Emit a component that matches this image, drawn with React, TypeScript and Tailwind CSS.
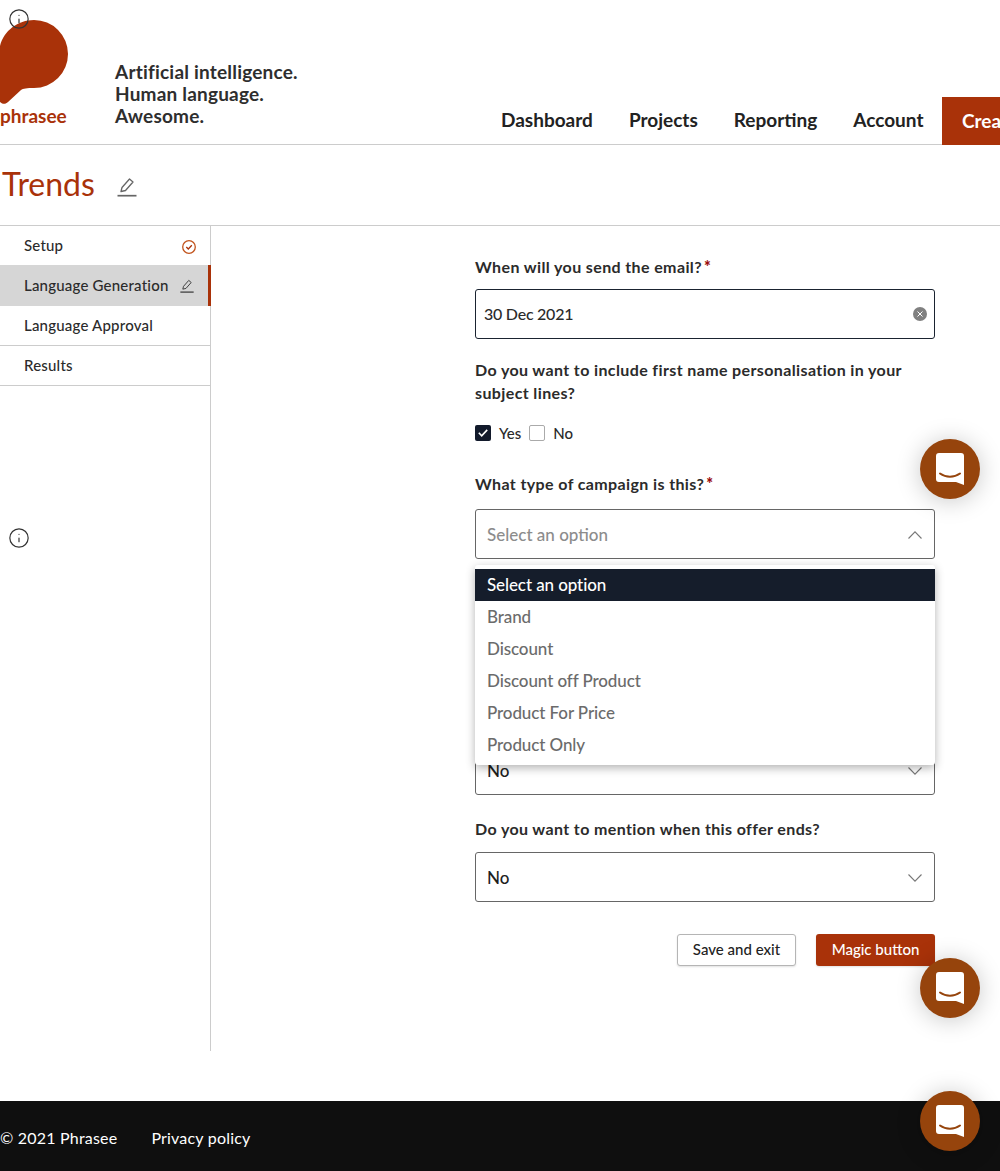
import { Info } from 'lucide-react';

const brand = 'text-[#a93209]';

const PenIcon = ({ className }: { className: string }) => (
  <svg viewBox="0 0 20 20" fill="none" stroke="currentColor" strokeWidth="1.3" className={className}>
    <path d="M4 14.500 5 10.500 12.500 2 16 5 8.500 13.500 4 14.500Z" strokeLinejoin="round" />
    <path d="M0.500 18.700H19.500" strokeWidth="1.700" />
  </svg>
);

const Chevron = ({ up }: { up?: boolean }) => (
  <svg viewBox="0 0 14 8" fill="none" stroke="#777" strokeWidth="1.100" className="w-[14px] h-[8px]">
    <path d={up ? 'M0.500 7.500 7 0.800 13.500 7.500' : 'M0.500 0.500 7 7.200 13.500 0.500'} />
  </svg>
);

const ChatButton = ({ className }: { className: string }) => (
  <div className={`absolute w-[60px] h-[60px] rounded-full bg-[#96440c] flex items-center justify-center shadow-[0_2px_24px_rgba(0,0,0,0.22)] ${className}`}>
    <svg viewBox="0 0 28 32" className="w-[28px] h-[32px]">
      <path d="M3 0H25A3 3 0 0 1 28 3V32L20 29H3A3 3 0 0 1 0 26V3A3 3 0 0 1 3 0Z" fill="#fff" />
      <path d="M4 20.500C10 24.800 18 24.800 24 20.500" fill="none" stroke="#96440c" strokeWidth="2" strokeLinecap="round" />
    </svg>
  </div>
);

const Select = ({ value, up, muted }: { value: string; up?: boolean; muted?: boolean }) => (
  <div className="h-[50px] border border-[#666] rounded-[3px] bg-white px-[11px] pt-[2px] flex items-center justify-between">
    <span className={`text-[17px] font-medium ${muted ? 'text-[#8c8c8c]' : 'text-[#1f1f1f]'}`}>{value}</span>
    <span className="mr-[1px]"><Chevron up={up} /></span>
  </div>
);

const Label = ({ children, required }: { children: string; required?: boolean }) => (
  <p className="text-[16px] leading-[23px] font-bold tracking-[0.38px] text-[#2b2b2b]">
    {children}
    {required && <span className="text-[#9b0d0d] ml-[2px] font-black">*</span>}
  </p>
);

const options = ['Brand', 'Discount', 'Discount off Product', 'Product For Price', 'Product Only'];

export default function App() {
  return (
    <div className="relative w-[1000px] h-[1171px] overflow-hidden bg-white font-['Lato',sans-serif]">
      <Info className="absolute left-[8px] top-[8px] w-[22px] h-[22px] text-[#333] z-10" strokeWidth={1.3} />
      <Info className="absolute left-[8px] top-[527px] w-[22px] h-[22px] text-[#333] z-10" strokeWidth={1.3} />

      {/* Header */}
      <header className="h-[145px] border-b border-[#ccc] flex items-end">
        <div className="w-[115px] h-[144px] shrink-0 relative">
          <svg viewBox="0 0 70 90" className="absolute left-[-1px] top-[18px] w-[70px] h-[90px]">
            <path d="M35 2A34 34 0 0 1 35 70C28 70 24 70.500 22 72L9 84C6 87 3 86 0 83V36C0 17 16 2 35 2Z" fill="#a93209" />
          </svg>
          <span className={`absolute left-0 top-[104px] text-[19px] leading-[24px] font-bold ${brand}`}>phrasee</span>
        </div>
        <div className="pb-[17px] text-[19px] leading-[22px] font-bold tracking-[0.2px] text-[#2e2e2e] w-[386px] shrink-0">
          <p>Artificial intelligence.</p>
          <p>Human language.</p>
          <p>Awesome.</p>
        </div>
        <nav className="flex gap-[36px] pb-[11px] text-[19px] leading-[26px] font-bold text-[#222] w-[441px] shrink-0">
          <span>Dashboard</span>
          <span>Projects</span>
          <span>Reporting</span>
          <span>Account</span>
        </nav>
        <div className="h-[48px] w-[100px] mb-[-1px] shrink-0 bg-[#a93209] text-white text-[19px] font-bold pl-[20px] flex items-center whitespace-nowrap">
          Create
        </div>
      </header>

      {/* Title */}
      <div className="h-[81px] border-b border-[#ccc] pl-[2px] pb-[3px] flex items-center gap-[22px]">
        <h1 className={`text-[32px] leading-[40px] font-normal ${brand}`}>Trends</h1>
        <PenIcon className="w-[20px] h-[20px] mt-[6px] text-[#666]" />
      </div>

      <div className="flex h-[825px]">
        {/* Sidebar */}
        <aside className="w-[211px] shrink-0 border-r border-[#ccc] text-[15px] font-medium tracking-[0.2px] text-[#2b2b2b]">
          <div className="h-[39px] pl-[24px] pr-[14px] flex items-center justify-between">
            <span>Setup</span>
            <svg viewBox="0 0 14 14" fill="none" className="w-[14px] h-[14px] mt-[2px]">
              <circle cx="7" cy="7" r="6.300" stroke="#c2541d" strokeWidth="1.300" />
              <path d="M4.300 7 6.300 9 9.800 5.200" stroke="#a93209" strokeWidth="1.300" />
            </svg>
          </div>
          <div className="h-[41px] pl-[24px] pr-[14px] flex items-center justify-between bg-[#d6d6d6] border-r-[3px] border-[#a93209] mr-[-1px]">
            <span>Language Generation</span>
            <PenIcon className="w-[14px] h-[14px] text-[#333]" />
          </div>
          <div className="h-[40px] pl-[24px] flex items-center border-b border-[#ccc]">Language Approval</div>
          <div className="h-[40px] pl-[24px] flex items-center border-b border-[#ccc]">Results</div>
        </aside>

        {/* Form */}
        <main className="w-[460px] ml-[264px] pt-[29px]">
          <Label required>When will you send the email?</Label>
          <div className="mt-[11px] h-[50px] border border-[#1a2330] rounded-[3px] pl-[8px] pr-[7px] pb-[1px] flex items-center justify-between">
            <span className="text-[16px] font-medium tracking-[-0.25px] text-[#2b2b2b]">30 Dec 2021</span>
            <span className="w-[14px] h-[14px] rounded-full bg-[#808080] flex items-center justify-center">
              <svg viewBox="0 0 6 6" className="w-[6px] h-[6px]" stroke="#fff" strokeWidth="1">
                <path d="M0.500 0.500 5.500 5.500M5.500 0.500 0.500 5.500" />
              </svg>
            </span>
          </div>
          <div className="mt-[19px]">
            <Label>Do you want to include first name personalisation in your subject lines?</Label>
          </div>
          <div className="mt-[21px] flex items-center h-[16px] text-[15px] font-medium text-[#2b2b2b]">
            <span className="w-[16px] h-[16px] rounded-[2px] bg-[#121a2b] flex items-center justify-center">
              <svg viewBox="0 0 10 8" fill="none" stroke="#fff" strokeWidth="1.600" className="w-[10px] h-[8px]">
                <path d="M0.800 3.800 3.700 6.800 9.200 0.900" />
              </svg>
            </span>
            <span className="ml-[8px]">Yes</span>
            <span className="ml-[8px] w-[16px] h-[16px] rounded-[2px] border border-[#aaa] bg-white" />
            <span className="ml-[8px]">No</span>
          </div>
          <div className="mt-[31px]">
            <Label required>What type of campaign is this?</Label>
          </div>
          <div className="relative mt-[14px]">
            <Select value="Select an option" up muted />
            <div className="absolute z-10 left-0 right-0 top-[56px] bg-white pt-[4px] pb-[4px] rounded-[3px] shadow-[0_3px_10px_rgba(0,0,0,0.3)] text-[17px] font-medium tracking-[-0.1px]">
              <div className="h-[32px] px-[12px] flex items-center bg-[#151d2b] text-white">Select an option</div>
              {options.map((option) => (
                <div key={option} className="h-[32px] px-[12px] flex items-center text-[#6b6b6b]">
                  {option}
                </div>
              ))}
            </div>
          </div>
          <div className="mt-[186px]">
            <Select value="No" />
          </div>
          <div className="mt-[22px]">
            <Label>Do you want to mention when this offer ends?</Label>
          </div>
          <div className="mt-[12px]">
            <Select value="No" />
          </div>
          <div className="mt-[32px] flex justify-end gap-[20px] text-[15px] font-medium">
            <button className="w-[119px] h-[32px] pb-[2px] rounded-[3px] border border-[#b5b5b5] bg-white text-[#222] shadow-[0_1px_2px_rgba(0,0,0,0.12)]">
              Save and exit
            </button>
            <button className="w-[119px] h-[32px] pb-[2px] rounded-[3px] bg-[#a93209] text-white shadow-[0_1px_2px_rgba(0,0,0,0.12)]">
              Magic button
            </button>
          </div>
        </main>
      </div>

      {/* Footer */}
      <footer className="absolute bottom-0 left-0 right-0 h-[70px] pt-[4px] bg-[#0f0f0f] text-white text-[16px] tracking-[0.2px] flex items-center gap-[34px]">
        <span>© 2021 Phrasee</span>
        <span>Privacy policy</span>
      </footer>

      <ChatButton className="left-[920px] top-[439px] z-20" />
      <ChatButton className="left-[920px] top-[958px] z-20" />
      <ChatButton className="left-[920px] top-[1091px] z-20" />
    </div>
  );
}
